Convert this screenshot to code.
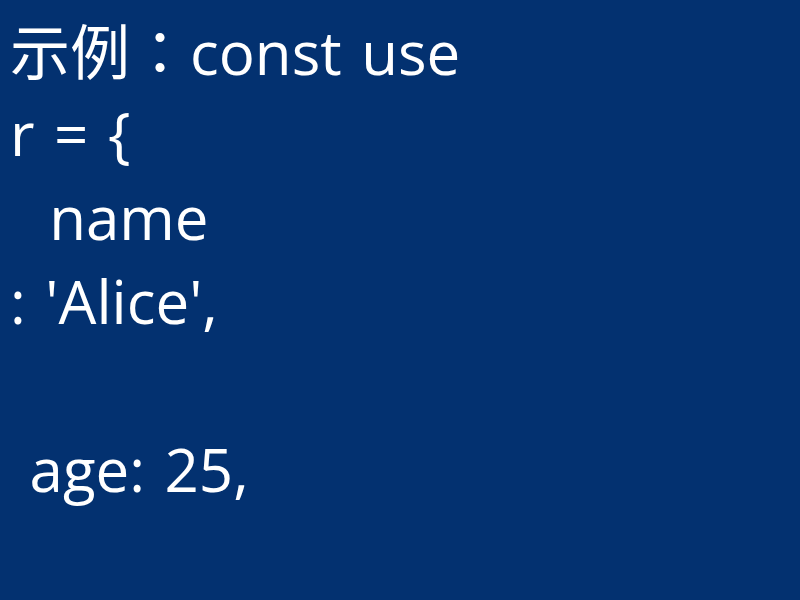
export default function App() {
  return (
    <div
      className="w-[800px] h-[600px] overflow-hidden bg-[#033170] text-white pl-[10px] pt-[7px] text-[60px] leading-[84px] [word-spacing:4px]"
      style={{ fontFamily: '"Open Sans", "Noto Sans CJK SC", sans-serif' }}
    >
      <div className="h-[84px] whitespace-pre">
        示例
        <span style={{ fontFamily: '"Noto Sans CJK TC", sans-serif' }}>：</span>
        const use
      </div>
      <div className="h-[84px] whitespace-pre">r = {"{"}</div>
      <div className="h-[84px] whitespace-pre">{"  name"}</div>
      <div className="h-[84px] whitespace-pre">: 'Alice',</div>
      <div className="h-[84px] whitespace-pre"></div>
      <div className="h-[84px] whitespace-pre">{" age: 25,"}</div>
    </div>
  );
}
